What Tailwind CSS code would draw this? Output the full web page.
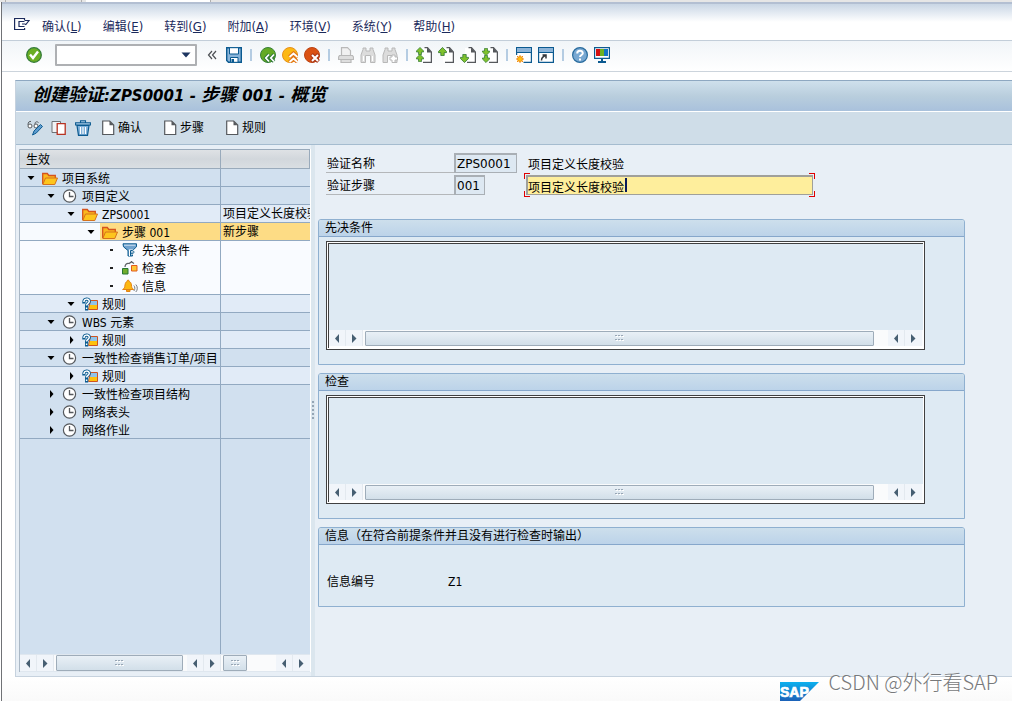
<!DOCTYPE html>
<html lang="zh-CN">
<head>
<meta charset="utf-8">
<meta name="viewport" content="width=device-width, initial-scale=1">
<title>创建验证:ZPS0001 - 步骤 001 - 概览</title>
<script src="https://cdn.jsdelivr.net/npm/@tailwindcss/browser@4"></script>
</head>
<body class="bg-white font-['DejaVu_Sans_Condensed','Noto_Sans_CJK_SC',sans-serif] text-[12px] leading-4 text-black">

<svg class="hidden" aria-hidden="true">
  <symbol id="down" viewBox="0 0 10 10"><path d="M1.500 3h7L5 7z" fill="#000"/></symbol>
  <symbol id="right" viewBox="0 0 10 10"><path d="M4 1v8l3.500-4z" fill="#000"/></symbol>
  <symbol id="dot" viewBox="0 0 10 10"><path d="M4 4h3v2H4z" fill="#222"/></symbol>
  <symbol id="folder" viewBox="0 0 16 16"><path d="M.7 13V2.500h4.600l1.500 2h6.500v2.500" fill="#fbb91e" stroke="#d5531d" stroke-width="1.300"/><path d="M3.500 7h12L12.800 13.500H.8z" fill="#fdc51d" stroke="#d5721d" stroke-width="1"/></symbol>
  <symbol id="clock" viewBox="0 0 16 16"><circle cx="7.500" cy="7" r="6.100" fill="#fff" stroke="#55585c" stroke-width="1.200"/><path d="M7.500 3v4.500h4" fill="none" stroke="#55585c" stroke-width="1.300"/></symbol>
  <symbol id="rule" viewBox="0 0 16 16"><path d="M8.500 3.500h7v9h-9z" fill="#8fc4ea" stroke="#cf5420" stroke-width="1"/><path d="M8 8h7v4H7z" fill="#fec10d"/><path d="M1.900 5C1.900 1.300 7.300 1.300 7.300 4.200c0 2.100-2.700 2.100-2.700 4.300M4.600 10.200v1.800" fill="none" stroke="#0a5c91" stroke-width="3.200" stroke-linecap="square"/><path d="M1.900 5C1.900 1.300 7.300 1.300 7.300 4.200c0 2.100-2.700 2.100-2.700 4.300M4.600 10.500v1.500" fill="none" stroke="#fff" stroke-width="1.500"/></symbol>
  <symbol id="funnel" viewBox="0 0 16 16"><path d="M1 .8h13.500v3L10.500 7.500v5.500H6V7.500L1.500 3.800z" fill="#70a2ce" stroke="#0c5a8d"/><path d="M2 2.200h11.500" stroke="#cfe2f2"/><path d="M8 13V7.500h2c2.500 0 2.500 3.200 0 3.200H8" fill="none" stroke="#fff" stroke-width="2"/><path d="M8.500 13V7.500h1.500c2.500 0 2.500 3.200 0 3.200H8.500" fill="none" stroke="#0c5a8d" stroke-width="1"/></symbol>
  <symbol id="check" viewBox="0 0 16 16"><path d="M.5 7.500h5.500v5.500H.5z" fill="#72ad2c" stroke="#267534"/><path d="M9.500 4.500H15V10H9.500z" fill="#fdc735" stroke="#e15b1f"/><path d="M3 6C3 3 5 2 7 2.500l3-2M9 .5l3 2" fill="none" stroke="#5b5e62" stroke-width="1.200"/></symbol>
  <symbol id="bell" viewBox="0 0 16 16"><path d="M.6 10.500c2-1 2-2 2.400-4.500.3-2.200 1-3 2-3.500C5 .6 7.200.6 7.200 2.500c1.400.5 2 1.500 2.200 3.500.3 2.500.5 3.500 2.300 4.500zM4.500 11h3.500v1.500h-3.500z" fill="#fdb812" stroke="#e48313"/><path d="M11.800 6.500c1.400 1.500 1.400 4 0 5.500M13.800 5.500c2 2 2 5.500 0 7.500" fill="none" stroke="#777b80"/></symbol>
  <symbol id="page" viewBox="0 0 16 16"><path d="M.7 1h7l4 4v9.500h-11z" fill="#fff" stroke="#56595d" stroke-width="1.200"/><path d="M7.500 1v4.200h4.200z" fill="#56595d"/></symbol>
  <symbol id="sl" viewBox="0 0 16 16"><path d="M10 4v9L6 8.500z" fill="#475f72"/></symbol>
  <symbol id="sr" viewBox="0 0 16 16"><path d="M6 4v9l4.500-4.500z" fill="#475f72"/></symbol>
  <symbol id="grip" viewBox="0 0 9 6"><path d="M1 1h2v1H1zM4 1h2v1H4zM7 1h2v1H7zM1 5h2v1H1zM4 5h2v1H4zM7 5h2v1H7z" fill="#fff"/><path d="M0 0h2v1H0zM3 0h2v1H3zM6 0h2v1H6zM0 4h2v1H0zM3 4h2v1H3zM6 4h2v1H6z" fill="#98a6b4"/></symbol>
  <symbol id="sheet" viewBox="0 0 16 16"><path d="M5 1h6.500L15.400 5v10.300H5z" fill="#fff"/><path d="M8.500.7h3L15.400 5v10.300H7" fill="none" stroke="#55585c" stroke-width="1.300"/><path d="M11 .5v5h4.500z" fill="#55585c"/></symbol>
  <symbol id="ua" viewBox="0 0 8 8"><path d="M4 .4L7.600 4v1H5.500v2.600h-3V5H.4V4z" fill="#7fc12c" stroke="#2d7430" stroke-width=".7"/></symbol>
  <symbol id="da" viewBox="0 0 8 8"><path d="M4 7.600L.4 4V3h2.100V.4h3V3h2.100v1z" fill="#7fc12c" stroke="#2d7430" stroke-width=".7"/></symbol>
</svg>

<div class="flex min-h-screen flex-col">
  <!-- window strip -->
  <div class="flex h-[2px] shrink-0 bg-[#e6e6e6]"><span class="ml-[5px] w-[77px] border-x border-[#b0b0b0]"></span><span class="ml-1 w-[125px] border-r border-[#b0b0b0] bg-white"></span></div>

  <div class="ml-px flex grow flex-col border-l border-[#707276] bg-white">
    <nav class="flex h-[39px] items-center gap-[21px] border-b border-t-2 border-b-[#c3ced9] border-t-[#b3bfd2] bg-linear-to-b from-[#c9d6e5] to-white to-50% pl-3 pt-[10px] text-[#1b2a5c]" aria-label="菜单">
      <button class="-mr-[9px] mb-1" aria-label="菜单"><svg class="h-4 w-4" viewBox="0 0 16 16" fill="none" stroke="#1b2a5c" stroke-width="1.200"><path d="M10.500 3V1.500H.6v11h10V11M10.500 4.500H5v5h5.500M8 7h3.500M10.500 3.500h4.500L11.500 8"/></svg></button>
      <button>确认<span class="text-[13px]">(<u>L</u>)</span></button>
      <button>编辑<span class="text-[13px]">(<u>E</u>)</span></button>
      <button>转到<span class="text-[13px]">(<u>G</u>)</span></button>
      <button>附加<span class="text-[13px]">(<u>A</u>)</span></button>
      <button>环境<span class="text-[13px]">(<u>V</u>)</span></button>
      <button>系统<span class="text-[13px]">(<u>Y</u>)</span></button>
      <button>帮助<span class="text-[13px]">(<u>H</u>)</span></button>
    </nav>

    <div class="flex h-[31px] items-center gap-[6px] border-b border-[#ccd4dc] bg-linear-to-b from-[#f1f5f8] to-white pb-[2px] pl-6" role="toolbar" aria-label="标准工具栏">
      <button aria-label="回车"><svg class="h-4 w-4" viewBox="0 0 16 16"><circle cx="8" cy="8" r="7.300" fill="#6bae24" stroke="#347c38" stroke-width="1.300"/><path d="M4 7.500l3 3.500 5-6.500" fill="none" stroke="#fff" stroke-width="2.400"/></svg></button>
      <div class="ml-[7px] flex h-[22px] w-[142px] items-center rounded-[1px] border-2 border-[#aeb0b3] bg-white">
        <input class="min-w-0 grow outline-none" aria-label="命令">
        <button class="flex h-full items-center px-1" aria-label="命令历史"><svg class="h-[6px] w-[10px]" viewBox="0 0 10 6"><path d="M.5.500h9L5 5.500z" fill="#1d3560"/></svg></button>
      </div>
      <button class="ml-1" aria-label="收起"><svg class="mr-[3px] h-[10px] w-[10px]" viewBox="0 0 10 10" fill="none" stroke="#4c4f53" stroke-width="1.200"><path d="M5 1L1.500 5 5 9M9 1L5.500 5 9 9"/></svg></button>
      <button aria-label="保存"><svg class="h-4 w-4" viewBox="0 0 16 16"><path d="M.7.7h14.600v14.600H2.500L.7 13.500z" fill="#8ab5da" stroke="#0b5a90" stroke-width="1.400"/><path d="M3.500.7h9v6.300h-9z" fill="#fff" stroke="#0b5a90"/><path d="M4.500 10.500h7.500v4.800H4.500z" fill="#fff" stroke="#0b5a90"/><path d="M5.500 12h2.500v3.500H5.500z" fill="#0b5a90"/></svg></button>
      <span class="mx-[2px] h-3 w-[2px] bg-[#b5cce2]"></span>
      <button aria-label="返回"><svg class="h-4 w-4" viewBox="0 0 16 16"><circle cx="8" cy="8" r="7.500" fill="#64aa24" stroke="#378139"/><path d="M9 7.500L5.800 11 9 14.500M14 7.500l-3.200 3.500 3.200 3.500" fill="none" stroke="#277333" stroke-width="3.400"/><path d="M9 7.500L5.800 11 9 14.500M14 7.500l-3.200 3.500 3.200 3.500" fill="none" stroke="#fff" stroke-width="1.800"/></svg></button>
      <button aria-label="退出"><svg class="h-4 w-4" viewBox="0 0 16 16"><circle cx="8" cy="8" r="7.500" fill="#fcb814" stroke="#e5901b"/><path d="M7.500 10l4-3.500 4 3.500M7.500 15l4-3.500 4 3.500" fill="none" stroke="#e27718" stroke-width="4"/><path d="M7.500 10l4-3.500 4 3.500M7.500 15l4-3.500 4 3.500" fill="none" stroke="#fff" stroke-width="1.800"/></svg></button>
      <button aria-label="取消"><svg class="h-4 w-4" viewBox="0 0 16 16"><circle cx="8" cy="8" r="7.500" fill="#da5113" stroke="#bb4414"/><path d="M7.500 7.500l7 7M14.500 7.500l-7 7" stroke="#a93515" stroke-width="4"/><path d="M8 8l6 6M14 8l-6 6" stroke="#fff" stroke-width="2"/></svg></button>
      <span class="mx-[2px] h-3 w-[2px] bg-[#b5cce2]"></span>
      <button disabled aria-label="打印"><svg class="h-4 w-4" viewBox="0 0 16 16" fill="#f1f1f1" stroke="#b9b9b9" stroke-width="1.200"><path d="M3.500 9V.7h6l3 3V9"/><path d="M1.500 8.500h13l1 1.500v2.500H.6V10zM3 12.500h10v3H3z" fill="#dedede"/></svg></button>
      <button disabled aria-label="查找"><svg class="h-4 w-4" viewBox="0 0 16 16" fill="#dcdcdc" stroke="#b8b8b8"><path d="M3 2.500V1h3v3h4V1h3v1.500l2 5.500v7.500h-4.500V8.500h-5v7H1V8z"/><path d="M3.500 9v5M12.500 9v5" fill="none" stroke="#fff"/></svg></button>
      <button disabled aria-label="查找下一个"><svg class="h-4 w-4" viewBox="0 0 16 16" fill="#dcdcdc" stroke="#b8b8b8"><path d="M3 2.500V1h3v3h4V1h3v1.500l2 5.500v7.500h-4.500V8.500h-5v7H1V8z"/><path d="M10 8v2H8v3h2v2.500h3V13h2.500v-3H13V8z" fill="#fff"/></svg></button>
      <span class="mx-[2px] h-3 w-[2px] bg-[#b5cce2]"></span>
      <button aria-label="第一页"><svg class="h-4 w-4"><use href="#sheet"/><use href="#ua" x="0" y="0" width="8" height="8"/><use href="#ua" x="0" y="7" width="8" height="8"/></svg></button>
      <button aria-label="上一页"><svg class="h-4 w-4"><use href="#sheet"/><use href="#ua" x="0" y="0" width="9" height="9"/></svg></button>
      <button aria-label="下一页"><svg class="h-4 w-4"><use href="#sheet"/><use href="#da" x="0" y="7" width="9" height="9"/></svg></button>
      <button aria-label="最后一页"><svg class="h-4 w-4"><use href="#sheet"/><use href="#da" x="0" y="1" width="8" height="8"/><use href="#da" x="0" y="8" width="8" height="8"/></svg></button>
      <span class="mx-[2px] h-3 w-[2px] bg-[#b5cce2]"></span>
      <button aria-label="新建会话"><svg class="h-4 w-4" viewBox="0 0 16 16"><path d="M.6.600h14.800v14.800H.6z" fill="#fff" stroke="#0b5a90" stroke-width="1.200"/><path d="M1 1h14v4H1z" fill="#8db4d8"/><path d="M1 5.500h14" stroke="#0b5a90"/><path d="M0 8h7.500v8H0z" fill="#fff"/><circle cx="4" cy="12" r="2.500" fill="#fec010" stroke="#f08b12"/><path d="M4 8v1M4 15v1M0 12h1M7 12h1M1 9l1 1M7 9l-1 1M1 15l1-1M7 15l-1-1" stroke="#f08b12"/></svg></button>
      <button aria-label="创建快捷方式"><svg class="h-4 w-4" viewBox="0 0 16 16"><path d="M.6.600h14.800v14.800H.6z" fill="#fff" stroke="#0b5a90" stroke-width="1.200"/><path d="M1 1h14v4H1z" fill="#8db4d8"/><path d="M1 5.500h14" stroke="#0b5a90"/><path d="M3.500 13.500c0-2.500 1-4 4-5M4.500 8h3.500v3.500" fill="none" stroke="#33373b" stroke-width="1.500"/></svg></button>
      <span class="mx-[2px] h-3 w-[2px] bg-[#b5cce2]"></span>
      <button aria-label="帮助"><svg class="h-4 w-4" viewBox="0 0 16 16"><circle cx="8" cy="8" r="7.400" fill="#78a8d2" stroke="#286b9d" stroke-width="1.200"/><path d="M5.200 6.500c0-3.500 5.600-3.500 5.600-.3C10.800 8 8 8 8 10M8 11.500v2" fill="none" stroke="#fff" stroke-width="2"/></svg></button>
      <button aria-label="定制布局"><svg class="h-4 w-4" viewBox="0 0 16 16"><path d="M.6.600h14.800v10.800H.6z" fill="#fff" stroke="#0b5a90" stroke-width="1.200"/><path d="M2 2h4v7H2z" fill="#d40f0f"/><path d="M6 2h4v7H6z" fill="#6cb120"/><path d="M10 2h4v7h-4z" fill="#1273c4"/><path d="M8 11v4M4 15h8" stroke="#0b5a90" stroke-width="2"/></svg></button>
    </div>

    <main class="ml-[13px] mt-2 flex grow flex-col border-b border-l border-t border-[#c6d2de] border-t-[#8ea8c1] bg-[#e8eff6]">
      <h1 class="flex h-[31px] items-center border-b border-white bg-linear-to-b from-[#cfe0ec] via-[#b9cedd] to-[#a9c1dc] pb-[2px] pl-4 font-['DejaVu_Sans','Noto_Sans_CJK_SC',sans-serif] text-[18px] font-bold italic"><span class="whitespace-pre">创建验证<span class="text-[15px]">:ZPS0001 - </span>步骤<span class="text-[15px]"> 001 - </span>概览</span></h1>
      <div class="flex h-[33px] items-center border-b border-[#a5bccf] bg-[#cfdde8] pl-[11px]" role="toolbar" aria-label="应用工具栏">
        <button aria-label="显示/更改"><svg class="h-4 w-4" viewBox="0 0 16 16" fill="none"><path d="M1 5c0-3 1.500-4 3-3.500M8 4c0-2 1.500-3 3.500-1.500" stroke="#55595d"/><circle cx="3" cy="6" r="2" fill="#fff" stroke="#55595d"/><circle cx="9" cy="6" r="2" fill="#fff" stroke="#55595d"/><path d="M5.500 15l1.500-4 6.500-6.500 2 2-6.200 6.500z" fill="#5e9bcd" stroke="#0d5c92"/></svg></button>
        <button class="ml-2" aria-label="复制"><svg class="h-4 w-4" viewBox="0 0 16 16"><path d="M1 1.500h8.500v11H1z" fill="#f1f4f7" stroke="#6e7276"/><path d="M6.200 3.700h8v10.600h-8z" fill="#fff" stroke="#b83322" stroke-width="1.300"/></svg></button>
        <button class="ml-2" aria-label="删除"><svg class="h-4 w-4" viewBox="0 0 16 16"><path d="M2 5.500h12L12.500 15.300h-9z" fill="#7fb0da" stroke="#0b5a90" stroke-width="1.200"/><path d="M5.500 2.500V.8h5v1.700M.6 5V2.700h14.800V5z" fill="#a6c8e4" stroke="#0b5a90" stroke-width="1.100"/><path d="M5.500 7v7M8 7v7M10.500 7v7" stroke="#fff" stroke-width="1.100"/></svg></button>
        <div class="ml-[11px] flex gap-[22px]">
          <button class="flex items-center"><svg class="h-4 w-4"><use href="#page"/></svg>确认</button>
          <button class="flex items-center"><svg class="h-4 w-4"><use href="#page"/></svg>步骤</button>
          <button class="flex items-center"><svg class="h-4 w-4"><use href="#page"/></svg>规则</button>
        </div>
      </div>

      <div class="flex grow">
        <!-- navigation tree -->
        <section class="mb-1 ml-[3px] mt-1 flex w-[292px] shrink-0 flex-col border-l border-r border-l-[#aab8c6] border-r-white bg-[#d1e0ef]" aria-label="验证树">
          <table class="w-full table-fixed border-separate border-spacing-0 text-left">
            <colgroup><col class="w-[201px]"><col></colgroup>
            <thead>
              <tr class="h-5 bg-linear-to-b from-[#e0e3e6] via-[#d2d7dc] to-[#dadfe3]">
                <th class="border-b border-r border-t border-[#99aabb] px-[6px] pt-[2px] font-normal">生效</th>
                <th class="border-b border-r border-t border-[#99aabb]"></th>
              </tr>
            </thead>
            <tbody class="whitespace-nowrap">
              <tr class="h-[18px]"><td class="border-b border-r border-[#92a9c1]"><div class="flex h-[17px] items-center pl-[6px]"><svg class="h-[10px] w-[14px] pr-1"><use href="#down"/></svg><span class="flex h-full grow items-center gap-1 pl-[2px] pt-[2px]"><svg class="h-4 w-4"><use href="#folder"/></svg>项目系统</span></div></td><td class="border-b border-[#92a9c1]"></td></tr>
              <tr class="h-[18px]"><td class="border-b border-r border-[#92a9c1]"><div class="flex h-[17px] items-center pl-[26px]"><svg class="h-[10px] w-[14px] pr-1"><use href="#down"/></svg><span class="flex h-full grow items-center gap-1 pl-[2px] pt-[2px]"><svg class="h-4 w-4"><use href="#clock"/></svg>项目定义</span></div></td><td class="border-b border-[#92a9c1]"></td></tr>
              <tr class="h-[18px] bg-[#e1ebf7]"><td class="border-b border-r border-[#92a9c1]"><div class="flex h-[17px] items-center pl-[46px]"><svg class="h-[10px] w-[14px] pr-1"><use href="#down"/></svg><span class="flex h-full grow items-center gap-1 pl-[2px] pt-[2px]"><svg class="h-4 w-4"><use href="#folder"/></svg>ZPS0001</span></div></td><td class="overflow-hidden border-b border-[#92a9c1] pl-[2px]"><div class="h-[17px] pt-[2px] leading-[15px]">项目定义长度校验</div></td></tr>
              <tr class="h-[18px] bg-[#f7fafe]" aria-selected="true"><td class="border-b border-r border-[#92a9c1]"><div class="flex h-[17px] items-center pl-[66px]"><svg class="h-[10px] w-[14px] pr-1"><use href="#down"/></svg><span class="flex h-full grow items-center gap-1 bg-[#fddc85] pl-[2px] pt-[2px]"><svg class="h-4 w-4"><use href="#folder"/></svg>步骤 001</span></div></td><td class="border-b border-[#92a9c1] bg-[#fddc85] pl-[2px]"><div class="h-[17px] pt-[2px] leading-[15px]">新步骤</div></td></tr>
              <tr class="h-[18px] bg-[#f9fbff]"><td class="border-r border-[#92a9c1]"><div class="flex h-[18px] items-center pl-[86px]"><svg class="h-[10px] w-[14px] pr-1"><use href="#dot"/></svg><span class="flex h-full grow items-center gap-1 pl-[2px] pt-[2px]"><svg class="h-4 w-4"><use href="#funnel"/></svg>先决条件</span></div></td><td></td></tr>
              <tr class="h-[18px] bg-[#f9fbff]"><td class="border-r border-[#92a9c1]"><div class="flex h-[18px] items-center pl-[86px]"><svg class="h-[10px] w-[14px] pr-1"><use href="#dot"/></svg><span class="flex h-full grow items-center gap-1 pl-[2px] pt-[2px]"><svg class="h-4 w-4"><use href="#check"/></svg>检查</span></div></td><td></td></tr>
              <tr class="h-[18px] bg-[#f9fbff]"><td class="border-b border-r border-[#92a9c1]"><div class="flex h-[17px] items-center pl-[86px]"><svg class="h-[10px] w-[14px] pr-1"><use href="#dot"/></svg><span class="flex h-full grow items-center gap-1 pl-[2px] pt-[2px]"><svg class="h-4 w-4"><use href="#bell"/></svg>信息</span></div></td><td class="border-b border-[#92a9c1]"></td></tr>
              <tr class="h-[18px] bg-[#e1ebf7]"><td class="border-b border-r border-[#92a9c1]"><div class="flex h-[17px] items-center pl-[46px]"><svg class="h-[10px] w-[14px] pr-1"><use href="#down"/></svg><span class="flex h-full grow items-center gap-1 pl-[2px] pt-[2px]"><svg class="h-4 w-4"><use href="#rule"/></svg>规则</span></div></td><td class="border-b border-[#92a9c1]"></td></tr>
              <tr class="h-[18px]"><td class="border-b border-r border-[#92a9c1]"><div class="flex h-[17px] items-center pl-[26px]"><svg class="h-[10px] w-[14px] pr-1"><use href="#down"/></svg><span class="flex h-full grow items-center gap-1 pl-[2px] pt-[2px]"><svg class="h-4 w-4"><use href="#clock"/></svg>WBS 元素</span></div></td><td class="border-b border-[#92a9c1]"></td></tr>
              <tr class="h-[18px] bg-[#e1ebf7]"><td class="border-b border-r border-[#92a9c1]"><div class="flex h-[17px] items-center pl-[46px]"><svg class="h-[10px] w-[14px] pr-1"><use href="#right"/></svg><span class="flex h-full grow items-center gap-1 pl-[2px] pt-[2px]"><svg class="h-4 w-4"><use href="#rule"/></svg>规则</span></div></td><td class="border-b border-[#92a9c1]"></td></tr>
              <tr class="h-[18px]"><td class="border-b border-r border-[#92a9c1]"><div class="flex h-[17px] items-center pl-[26px]"><svg class="h-[10px] w-[14px] pr-1"><use href="#down"/></svg><span class="flex h-full grow items-center gap-1 pl-[2px] pt-[2px]"><svg class="h-4 w-4"><use href="#clock"/></svg>一致性检查销售订单/项目</span></div></td><td class="border-b border-[#92a9c1]"></td></tr>
              <tr class="h-[18px] bg-[#e1ebf7]"><td class="border-b border-r border-[#92a9c1]"><div class="flex h-[17px] items-center pl-[46px]"><svg class="h-[10px] w-[14px] pr-1"><use href="#right"/></svg><span class="flex h-full grow items-center gap-1 pl-[2px] pt-[2px]"><svg class="h-4 w-4"><use href="#rule"/></svg>规则</span></div></td><td class="border-b border-[#92a9c1]"></td></tr>
              <tr class="h-[18px]"><td class="border-r border-[#92a9c1]"><div class="flex h-[18px] items-center pl-[26px]"><svg class="h-[10px] w-[14px] pr-1"><use href="#right"/></svg><span class="flex h-full grow items-center gap-1 pl-[2px] pt-[2px]"><svg class="h-4 w-4"><use href="#clock"/></svg>一致性检查项目结构</span></div></td><td></td></tr>
              <tr class="h-[18px]"><td class="border-r border-[#92a9c1]"><div class="flex h-[18px] items-center pl-[26px]"><svg class="h-[10px] w-[14px] pr-1"><use href="#right"/></svg><span class="flex h-full grow items-center gap-1 pl-[2px] pt-[2px]"><svg class="h-4 w-4"><use href="#clock"/></svg>网络表头</span></div></td><td></td></tr>
              <tr class="h-[18px]"><td class="border-b border-r border-[#92a9c1]"><div class="flex h-[17px] items-center pl-[26px]"><svg class="h-[10px] w-[14px] pr-1"><use href="#right"/></svg><span class="flex h-full grow items-center gap-1 pl-[2px] pt-[2px]"><svg class="h-4 w-4"><use href="#clock"/></svg>网络作业</span></div></td><td class="border-b border-[#92a9c1]"></td></tr>
            </tbody>
          </table>
          <div class="w-[201px] grow border-r border-[#92a9c1]"></div>
          <div class="flex h-[18px] border-b border-t border-[#dfe7ef] bg-[#fafbfc]">
            <div class="flex w-[201px] items-center">
              <button aria-label="向左" class="w-[17px] border-r border-[#e3e9ef] bg-[#f1f5fa]"><svg class="h-4 w-4"><use href="#sl"/></svg></button>
              <button aria-label="向右" class="mr-[2px] w-[17px] border-r border-[#e3e9ef] bg-[#f1f5fa]"><svg class="h-4 w-4"><use href="#sr"/></svg></button>
              <div class="mr-1 flex h-4 grow items-center justify-center rounded-[1px] border border-[#9eacb9] bg-linear-to-b from-[#e9f0f6] to-[#d2dfe9]"><svg class="h-[6px] w-[9px]"><use href="#grip"/></svg></div>
              <button aria-label="向左" class="w-[17px] border-r border-[#e3e9ef] bg-[#f1f5fa]"><svg class="h-4 w-4"><use href="#sl"/></svg></button>
              <button aria-label="向右" class="w-[17px] border-r border-[#e3e9ef] bg-[#f1f5fa]"><svg class="h-4 w-4"><use href="#sr"/></svg></button>
            </div>
            <div class="flex grow items-center pl-[2px]">
              <div class="mr-auto flex h-4 w-6 items-center justify-center rounded-[1px] border border-[#9eacb9] bg-linear-to-b from-[#e9f0f6] to-[#d2dfe9]"><svg class="h-[6px] w-[9px]"><use href="#grip"/></svg></div>
              <button aria-label="向左" class="w-[17px] border-r border-[#e3e9ef] bg-[#f1f5fa]"><svg class="h-4 w-4"><use href="#sl"/></svg></button>
              <button aria-label="向右" class="w-[17px] bg-[#f1f5fa]"><svg class="h-4 w-4"><use href="#sr"/></svg></button>
            </div>
          </div>
        </section>

        <!-- splitter -->
        <div class="flex w-1 shrink-0 items-center justify-center bg-[#dbe6ee]"><svg class="h-5 w-1" viewBox="0 0 4 20"><path d="M1 0h2v2H1zM1 4h2v2H1zM1 8h2v2H1zM1 12h2v2H1zM1 16h2v2H1z" fill="#94a5b5"/></svg></div>

        <section class="min-w-0 grow pl-[3px] pr-[47px] pt-2">
          <form class="grid gap-[2px] pl-2">
            <div class="flex h-5 items-end">
              <label for="vname" class="h-5 w-32 border-b border-[#b4b7ba] pl-px pt-[3px]">验证名称</label>
              <input id="vname" readonly value="ZPS0001" class="h-5 w-[63px] border-2 border-b border-r border-[#a9afb5] bg-[#dde8f2] px-px font-['DejaVu_Sans',sans-serif] text-[12px] leading-4 outline-none">
              <span class="ml-[11px]">项目定义长度校验</span>
            </div>
            <div class="flex h-5 items-center">
              <label for="vstep" class="h-5 w-32 border-b border-[#b4b7ba] pl-px pt-[3px]">验证步骤</label>
              <input id="vstep" readonly value="001" class="h-5 w-[31px] border-2 border-b border-r border-[#a9afb5] bg-[#dde8f2] px-px font-['DejaVu_Sans',sans-serif] text-[12px] leading-4 outline-none">
              <div class="relative ml-[41px] w-[287px]">
                <input aria-label="验证步骤描述" value="项目定义长度校验" class="block h-5 w-full border-2 border-b border-r border-[#a0a09a] bg-[#feee9c] pl-0 pt-px leading-4 outline-none">
                <span class="absolute left-[99px] top-[3px] h-[14px] w-[2px] bg-[#0a1a5a]"></span>
                <svg class="absolute -left-[2px] -top-[2px] h-[6px] w-[6px]" viewBox="0 0 6 6"><path d="M0 0h6v1H1v5H0z" fill="#e00000"/></svg>
                <svg class="absolute -right-[2px] -top-[2px] h-[6px] w-[6px]" viewBox="0 0 6 6"><path d="M0 0h6v6H5V1H0z" fill="#e00000"/></svg>
                <svg class="absolute -bottom-[2px] -left-[2px] h-[6px] w-[6px]" viewBox="0 0 6 6"><path d="M0 0h1v5h5v1H0z" fill="#e00000"/></svg>
                <svg class="absolute -bottom-[2px] -right-[2px] h-[6px] w-[6px]" viewBox="0 0 6 6"><path d="M5 0h1v6H0V5h5z" fill="#e00000"/></svg>
              </div>
            </div>
          </form>

          <div class="mt-6 grid gap-2">
            <section class="rounded-t-[3px] border border-[#8fb0d0] bg-[#deeaf3]">
              <h2 class="h-[17px] rounded-t-[2px] border-b border-[#86a7cb] bg-linear-to-b from-[#cddfec] to-[#bcd3e9] pl-[6px]">先决条件</h2>
              <div class="mb-[14px] ml-[7px] mr-[39px] mt-1 border border-[#404040] bg-white p-px">
                <div class="border-l border-t border-[#404040] bg-[#deeaf3]">
                  <textarea aria-label="先决条件" class="block h-[86px] w-full resize-none outline-none"></textarea>
                  <div class="flex h-[18px] items-center border-b-2 border-white bg-[#fafbfc]">
                    <button aria-label="向左" class="w-[17px] border-r border-[#e3e9ef] bg-[#f1f5fa]"><svg class="h-4 w-4"><use href="#sl"/></svg></button>
                    <button aria-label="向右" class="mr-[2px] w-[17px] border-r border-[#e3e9ef] bg-[#f1f5fa]"><svg class="h-4 w-4"><use href="#sr"/></svg></button>
                    <div class="mr-[14px] flex h-[15px] grow items-center justify-center rounded-[1px] border border-[#9eacb9] bg-linear-to-b from-[#e9f0f6] to-[#d2dfe9]"><svg class="h-[6px] w-[9px]"><use href="#grip"/></svg></div>
                    <button aria-label="向左" class="w-[17px] border-r border-[#e3e9ef] bg-[#f1f5fa]"><svg class="h-4 w-4"><use href="#sl"/></svg></button>
                    <button aria-label="向右" class="mr-px w-[17px] bg-[#f1f5fa]"><svg class="h-4 w-4"><use href="#sr"/></svg></button>
                  </div>
                </div>
              </div>
            </section>

            <section class="rounded-t-[3px] border border-[#8fb0d0] bg-[#deeaf3]">
              <h2 class="h-[17px] rounded-t-[2px] border-b border-[#86a7cb] bg-linear-to-b from-[#cddfec] to-[#bcd3e9] pl-[6px]">检查</h2>
              <div class="mb-[14px] ml-[7px] mr-[39px] mt-1 border border-[#404040] bg-white p-px">
                <div class="border-l border-t border-[#404040] bg-[#deeaf3]">
                  <textarea aria-label="检查" class="block h-[86px] w-full resize-none outline-none"></textarea>
                  <div class="flex h-[18px] items-center border-b-2 border-white bg-[#fafbfc]">
                    <button aria-label="向左" class="w-[17px] border-r border-[#e3e9ef] bg-[#f1f5fa]"><svg class="h-4 w-4"><use href="#sl"/></svg></button>
                    <button aria-label="向右" class="mr-[2px] w-[17px] border-r border-[#e3e9ef] bg-[#f1f5fa]"><svg class="h-4 w-4"><use href="#sr"/></svg></button>
                    <div class="mr-[14px] flex h-[15px] grow items-center justify-center rounded-[1px] border border-[#9eacb9] bg-linear-to-b from-[#e9f0f6] to-[#d2dfe9]"><svg class="h-[6px] w-[9px]"><use href="#grip"/></svg></div>
                    <button aria-label="向左" class="w-[17px] border-r border-[#e3e9ef] bg-[#f1f5fa]"><svg class="h-4 w-4"><use href="#sl"/></svg></button>
                    <button aria-label="向右" class="mr-px w-[17px] bg-[#f1f5fa]"><svg class="h-4 w-4"><use href="#sr"/></svg></button>
                  </div>
                </div>
              </div>
            </section>

            <section class="rounded-t-[3px] border border-[#8fb0d0] bg-[#deeaf3]">
              <h2 class="h-[17px] rounded-t-[2px] border-b border-[#86a7cb] bg-linear-to-b from-[#cddfec] to-[#bcd3e9] pl-[6px]">信息（在符合前提条件并且没有进行检查时输出）</h2>
              <dl class="flex pb-4 pl-2 pt-[29px]"><dt class="w-[121px]">信息编号</dt><dd>Z1</dd></dl>
            </section>
          </div>
        </section>
      </div>
    </main>

    <footer class="relative flex h-6 shrink-0 items-end justify-end bg-linear-to-b from-white to-[#fafafa] pr-[193px]">
      <svg class="h-5 w-[39px]" viewBox="0 0 39 20" role="img" aria-label="SAP"><defs><linearGradient id="sapg" x2="0" y2="1"><stop stop-color="#0cb0ee"/><stop offset="1" stop-color="#1c61b8"/></linearGradient></defs><path d="M0 1h39L20 20H0z" fill="url(#sapg)"/><text x="0" y="15.500" fill="#fff" stroke="#fff" stroke-width=".7" font-family="Liberation Sans, sans-serif" font-weight="700" font-size="14">SAP</text></svg>
      <p class="absolute bottom-[7px] right-[14px] font-['Noto_Sans_CJK_SC',sans-serif] text-[20px] font-light leading-6 text-[#77797b] [text-shadow:1px_1px_0_white]">CSDN @外行看SAP</p>
    </footer>
  </div>
</div>
</body>
</html>
